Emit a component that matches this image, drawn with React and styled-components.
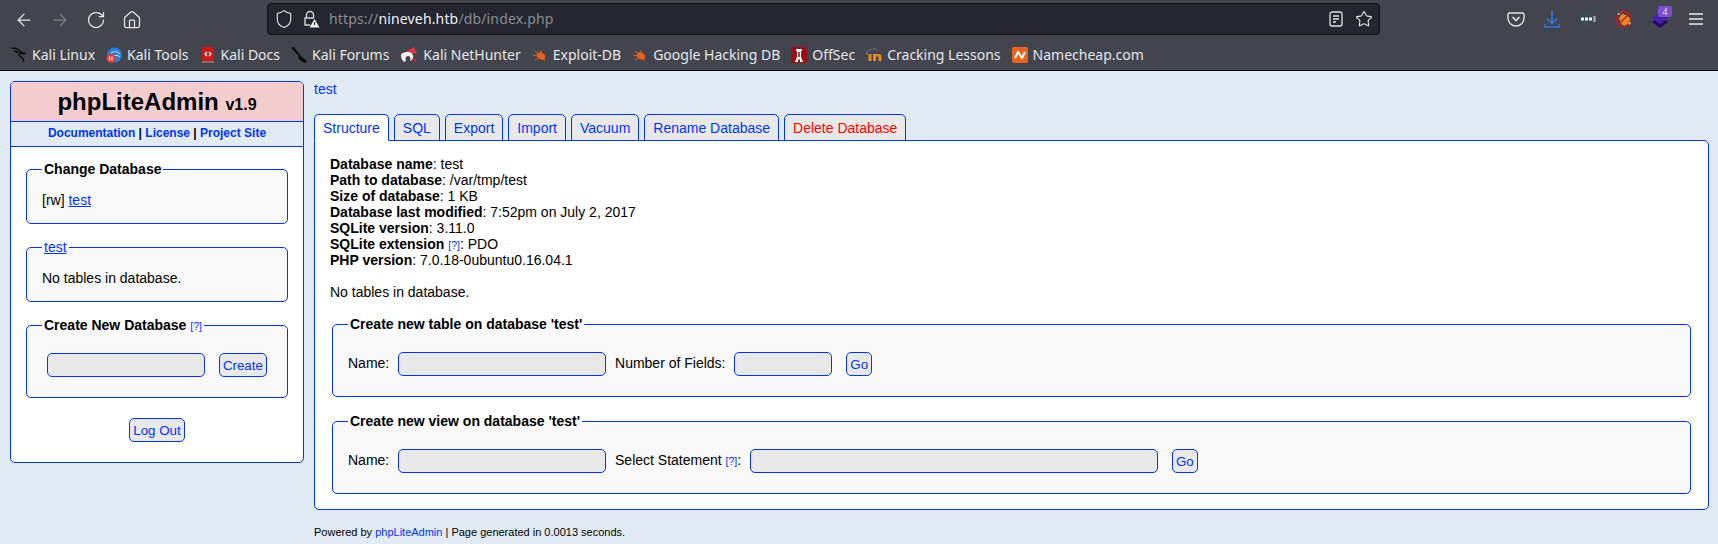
import styled, { createGlobalStyle } from 'styled-components';
import { ArrowLeft, ArrowRight, RotateCw, Home, Shield, Star } from 'lucide-react';

const GlobalStyle = createGlobalStyle`
  body {
    margin: 0;
    background: #e0ebf6;
    color: #000;
    font-family: "Liberation Sans", Arial, sans-serif;
    font-size: 14px;
    line-height: 16px;
  }
  a {
    color: #03f;
    text-decoration: none;
  }
`;

const Chrome = styled.div`
  height: 70px;
  background: #42454d;
  border-bottom: 1px solid #0c0c0f;
  color: #e6e7ea;
  font-family: "Noto Sans", sans-serif;
`;

const Toolbar = styled.div`
  display: flex;
  align-items: center;
  height: 38px;
`;

const NavButtons = styled.div`
  display: flex;
  align-items: center;
  gap: 16px;
  padding: 2px 0 0 14px;
  width: 267px;
  box-sizing: border-box;
`;

const NavIcon = styled.span`
  display: flex;
  color: ${(p) => (p.$off ? '#7d7f85' : '#e6e7ea')};
`;

const UrlBar = styled.div`
  display: flex;
  align-items: center;
  width: 1113px;
  height: 32px;
  box-sizing: border-box;
  padding: 0 6px;
  background: #23252f;
  border: 1px solid #0e0f13;
  border-radius: 4px;
  font-size: 14px;
  letter-spacing: 0.15px;
  color: #8b8d94;
`;

const UrlIcons = styled.div`
  display: flex;
  align-items: center;
  gap: 8px;
`;

const UrlText = styled.div`
  margin-left: 9px;
  flex: 1;
  b {
    color: #f2f3f5;
    font-weight: 400;
  }
`;

const UrlActions = styled.div`
  display: flex;
  align-items: center;
  gap: 10px;
`;

const ToolActions = styled.div`
  display: flex;
  align-items: center;
  gap: 16px;
  margin-left: auto;
  padding-right: 12px;
`;

const ToolIcon = styled.span`
  display: flex;
  width: 20px;
  height: 20px;
`;

const StackIcon = styled(ToolIcon)`
  position: relative;
`;

const Badge = styled.span`
  position: absolute;
  top: -3px;
  right: -2px;
  width: 14px;
  height: 11px;
  background: #7b4fd0;
  border-radius: 2px;
  color: #e4dcf7;
  font-size: 9px;
  line-height: 11px;
  text-align: center;
`;

const Bookmarks = styled.div`
  display: flex;
  align-items: center;
  gap: 11px;
  height: 32px;
  box-sizing: border-box;
  padding: 2px 0 0 11px;
  font-size: 14px;
`;

const Bookmark = styled.div`
  display: flex;
  align-items: center;
  gap: 5px;
  white-space: nowrap;
`;

const Page = styled.div`
  display: flex;
  align-items: flex-start;
  gap: 10px;
  padding: 10px 9px 0 10px;
`;

const Sidebar = styled.div`
  flex: 0 0 294px;
  box-sizing: border-box;
  height: 382px;
  background: #fff;
  border: 1px solid #03f;
  border-radius: 5px;
  overflow: hidden;
`;

const Title = styled.h1`
  margin: 0;
  height: 39px;
  background: #f3cdcd;
  font-size: 24px;
  line-height: 39px;
  font-weight: 700;
  text-align: center;
  span {
    font-size: 16px;
  }
`;

const SideNav = styled.div`
  height: 24px;
  background: #e0ebf6;
  border-top: 1px solid #03f;
  border-bottom: 1px solid #03f;
  font-size: 12px;
  line-height: 23px;
  font-weight: 700;
  text-align: center;
`;

const SideBody = styled.div`
  padding: 14px 13px;
  text-align: center;
`;

const Box = styled.fieldset`
  margin: 0 2px ${(p) => p.$gap || 15}px;
  padding: 15px;
  background: #f9f9f9;
  border: 1px solid #03f;
  border-radius: 5px;
  text-align: left;
`;

const Legend = styled.legend`
  padding: 0 2px;
  font-weight: ${(p) => (p.$plain ? 400 : 700)};
`;

const UnderLink = styled.a`
  text-decoration: underline;
`;

const Help = styled.a`
  font-size: 10.5px;
  line-height: 1;
  font-weight: 400;
`;

const Field = styled.input`
  box-sizing: border-box;
  width: ${(p) => p.$w}px;
  height: 24px;
  margin: 5px;
  padding: 0 4px;
  vertical-align: middle;
  background: #e9e9e9;
  border: 1px solid #03f;
  border-radius: 5px;
`;

const Btn = styled.button`
  box-sizing: border-box;
  height: 24px;
  margin: 5px;
  padding: 0 3px;
  vertical-align: middle;
  background: #e9e9e9;
  border: 1px solid #03f;
  border-radius: 5px;
  color: #03f;
  font-family: "Liberation Sans", Arial, sans-serif;
  font-size: 13.33px;
`;

const Main = styled.div`
  flex: 1;
  min-width: 0;
`;

const Crumb = styled.div`
  margin-bottom: 17px;
`;

const Tabs = styled.div`
  display: flex;
  gap: 5px;
  position: relative;
  z-index: 1;
  margin-bottom: -1px;
`;

const Tab = styled.a`
  box-sizing: border-box;
  height: 27px;
  padding: 0 8px;
  line-height: 26px;
  background: ${(p) => (p.$active ? '#fff' : '#e9e9e9')};
  border: 1px solid #03f;
  border-bottom: ${(p) => (p.$active ? '1px solid #fff' : '1px solid #03f')};
  border-radius: 5px 5px 0 0;
  color: ${(p) => (p.$danger ? '#f00' : '#03f')};
`;

const Panel = styled.div`
  padding: 15px 15px 0;
  background: #fff;
  border: 1px solid #03f;
  border-radius: 0 5px 5px 5px;
`;

const Info = styled.div`
  margin-bottom: 16px;
`;

const Footer = styled.div`
  margin-top: 14px;
  font-size: 11px;
  line-height: 16px;
`;

const KaliDragon = () => (
  <svg width="16" height="16" viewBox="0 0 16 16" fill="none" stroke="#0b0b0b" strokeWidth="1.4">
    <path d="M1 1.500c3-.8 6 .3 7.500 2.500 1 1.500 2.500 2 6 2.500-3 .3-4.500.3-5.500-.3-1.500 1-1 3 1 4 2 1 3 2.500 2.500 4.800" />
    <path d="M3 4c2 0 3.500.8 4 2" />
  </svg>
);

const KaliTools = () => (
  <svg width="16" height="16" viewBox="0 0 16 16">
    <circle cx="8.500" cy="8" r="7.500" fill="#2b7de0" />
    <path d="M5 6c3-2 6-2 9 1M7 9c2-1 5-1 7 1" stroke="#cfe3f8" fill="none" />
    <circle cx="5" cy="11.500" r="4.500" fill="#e23b2e" />
    <path d="M3.500 9.500v4M6 9.500v4" stroke="#fff" strokeWidth="1.200" />
  </svg>
);

const KaliDocs = () => (
  <svg width="16" height="16" viewBox="0 0 16 16">
    <rect x="2" y="0" width="12" height="15" fill="#c81a1a" />
    <rect x="2" y="14" width="12" height="2" fill="#8c6a6a" />
    <path d="M7 5L5 7l2 2M9 5l2 2-2 2" stroke="#fff" fill="none" strokeWidth="1.200" />
  </svg>
);

const KaliForums = () => (
  <svg width="16" height="16" viewBox="0 0 16 16" fill="#0a0a0a">
    <path d="M0 1l3-1 3 4 3 4 3 3 4 3-1 2-3-1-4-3-1-4-3-3z" />
  </svg>
);

const NetHunter = () => (
  <svg width="18" height="16" viewBox="0 0 18 16">
    <path d="M1 8L14 0l3 6-7 1-3 3z" fill="#e2343a" />
    <path d="M1 8c0-2 4-3 7-3 4 0 6 3 5 7l-3 2c1-3 0-5-2-5-2 0-3 2-2 5l-2 1C2 13 1 11 1 8z" fill="#f1f1f1" />
    <path d="M12 11l5 1-3 3z" fill="#d22" />
  </svg>
);

const Bug = () => (
  <svg width="16" height="16" viewBox="0 0 16 16" fill="#e8601c" stroke="#e8601c">
    <ellipse cx="9" cy="9" rx="4.500" ry="3.200" transform="rotate(30 9 9)" stroke="none" />
    <path d="M3 4l4 3M1 8l5 1M3 13l4-2M8 3l2 3M13 14l-2-3" strokeWidth="0.900" fill="none" />
  </svg>
);

const OffSecIcon = () => (
  <svg width="16" height="16" viewBox="0 0 16 16">
    <rect width="16" height="16" fill="#9d0f17" />
    <path d="M5 2h6v2h-1v6l2 5H4l2-5V4H5z" fill="#fff" />
    <rect x="7.200" y="5" width="1.600" height="5" fill="#9d0f17" />
    <rect x="7" y="12.500" width="2" height="2.500" fill="#9d0f17" />
  </svg>
);

const CrackingIcon = () => (
  <svg width="16" height="16" viewBox="0 0 16 16">
    <rect x="0" y="5" width="2" height="3" fill="#6a6a6a" />
    <path d="M0 6c2-4 8-5 12-3" stroke="#5c5c5c" strokeWidth="1.500" fill="none" />
    <rect x="2.500" y="7" width="3" height="7" fill="#e88a1a" />
    <path d="M7 14V7h6c1.500 0 2.500 1 2.500 2.500V14h-3V9.500h-2.500V14z" fill="#e88a1a" />
  </svg>
);

const NamecheapIcon = () => (
  <svg width="16" height="16" viewBox="0 0 16 16">
    <rect width="16" height="16" rx="2" fill="#e9641d" />
    <path d="M3 11l3-6 4 6 3-6" stroke="#fff" strokeWidth="2" fill="none" strokeLinejoin="round" />
  </svg>
);

const LockWarn = () => (
  <svg width="18" height="18" viewBox="0 0 18 18" fill="none" stroke="#d5d6da" strokeWidth="1.400">
    <path d="M4.500 8V5a3.500 3.500 0 0 1 7 0v3" />
    <path d="M8 15H3V8h9" />
    <path d="M12.500 9l5 8.500h-10z" fill="#f0f0f2" stroke="none" />
    <path d="M12.500 12v3" stroke="#23252f" strokeWidth="1.200" />
  </svg>
);

const Reader = () => (
  <svg width="18" height="18" viewBox="0 0 18 18" fill="none" stroke="#e0e1e4" strokeWidth="1.300">
    <rect x="3" y="2" width="12" height="14" rx="2" />
    <path d="M6 6h6M6 9h6M6 12h3" />
  </svg>
);

const Pocket = () => (
  <svg width="20" height="20" viewBox="0 0 20 20" fill="none" stroke="#e0e1e4" strokeWidth="1.400">
    <path d="M3.500 4h13A1.500 1.500 0 0 1 18 5.500V9a8 8 0 0 1-16 0V5.500A1.500 1.500 0 0 1 3.500 4z" />
    <path d="M6.500 8l3.500 3.500L13.500 8" strokeWidth="1.700" />
  </svg>
);

const Download = () => (
  <svg width="20" height="20" viewBox="0 0 20 20" fill="none" stroke="#2f7be8" strokeWidth="1.500">
    <path d="M10 2v12M5 9.500l5 5 5-5" />
    <path d="M3 15v3h14v-3" />
  </svg>
);

const Dots = () => (
  <svg width="20" height="20" viewBox="0 0 20 20">
    <rect x="2" y="3" width="16" height="14" fill="#3c4a54" />
    <path d="M3 8.500h3v3H3zM7 8.500h3v3H7zM11 8.500h3v3h-3z" fill="#f4f4f4" />
    <rect x="15.500" y="7" width="2" height="6" fill="#aeb4b8" />
  </svg>
);

const FoxOff = () => (
  <svg width="20" height="20" viewBox="0 0 20 20">
    <circle cx="10" cy="10" r="7.500" fill="#42454d" />
    <path d="M5 9l3-4 4 1 4 3-1 5-4 3-4-2z" fill="#e98a1e" />
    <circle cx="10" cy="10" r="7.500" fill="none" stroke="#c8161d" strokeWidth="1.500" />
    <path d="M15.500 4.500l-11 11" stroke="#c8161d" strokeWidth="1.500" />
    <path d="M3 5l2-1 1 2zM15 13l2 1-2 2z" fill="#f0f0f0" />
  </svg>
);

const Stack = () => (
  <svg width="20" height="20" viewBox="0 0 20 20">
    <path d="M10 8l8 5-8 6-8-6z" fill="#24096e" />
    <path d="M10 3l8 6-8 6-8-6z" fill="#4522a8" />
  </svg>
);

const Menu = () => (
  <svg width="20" height="20" viewBox="0 0 20 20" stroke="#e6e7ea" strokeWidth="1.500">
    <path d="M3 5h14M3 10h14M3 15h14" />
  </svg>
);

const marks = [
  ['Kali Linux', <KaliDragon />],
  ['Kali Tools', <KaliTools />],
  ['Kali Docs', <KaliDocs />],
  ['Kali Forums', <KaliForums />],
  ['Kali NetHunter', <NetHunter />],
  ['Exploit-DB', <Bug />],
  ['Google Hacking DB', <Bug />],
  ['OffSec', <OffSecIcon />],
  ['Cracking Lessons', <CrackingIcon />],
  ['Namecheap.com', <NamecheapIcon />],
];

const tabs = ['Structure', 'SQL', 'Export', 'Import', 'Vacuum', 'Rename Database', 'Delete Database'];

const info = [
  ['Database name', 'test'],
  ['Path to database', '/var/tmp/test'],
  ['Size of database', '1 KB'],
  ['Database last modified', '7:52pm on July 2, 2017'],
  ['SQLite version', '3.11.0'],
];

export default function App() {
  return (
    <>
      <GlobalStyle />
      <Chrome>
        <Toolbar>
          <NavButtons>
            <NavIcon><ArrowLeft size={20} strokeWidth={1.5} /></NavIcon>
            <NavIcon $off><ArrowRight size={20} strokeWidth={1.5} /></NavIcon>
            <NavIcon><RotateCw size={20} strokeWidth={1.5} /></NavIcon>
            <NavIcon><Home size={20} strokeWidth={1.5} /></NavIcon>
          </NavButtons>
          <UrlBar>
            <UrlIcons>
              <Shield size={20} strokeWidth={1.5} color="#d5d6da" />
              <LockWarn />
            </UrlIcons>
            <UrlText>https://<b>nineveh.htb</b>/db/index.php</UrlText>
            <UrlActions>
              <Reader />
              <Star size={18} strokeWidth={1.5} color="#e0e1e4" />
            </UrlActions>
          </UrlBar>
          <ToolActions>
            <ToolIcon><Pocket /></ToolIcon>
            <ToolIcon><Download /></ToolIcon>
            <ToolIcon><Dots /></ToolIcon>
            <ToolIcon><FoxOff /></ToolIcon>
            <StackIcon><Stack /><Badge>4</Badge></StackIcon>
            <ToolIcon><Menu /></ToolIcon>
          </ToolActions>
        </Toolbar>
        <Bookmarks>
          {marks.map(([label, icon]) => (
            <Bookmark key={label}>{icon}{label}</Bookmark>
          ))}
        </Bookmarks>
      </Chrome>
      <Page>
        <Sidebar>
          <Title>phpLiteAdmin <span>v1.9</span></Title>
          <SideNav>
            <a href="#doc">Documentation</a> | <a href="#lic">License</a> | <a href="#site">Project Site</a>
          </SideNav>
          <SideBody>
            <Box>
              <Legend>Change Database</Legend>
              [rw] <UnderLink href="#test">test</UnderLink>
            </Box>
            <Box>
              <Legend $plain><UnderLink href="#test">test</UnderLink></Legend>
              No tables in database.
            </Box>
            <Box>
              <Legend>Create New Database <Help href="#help">[?]</Help></Legend>
              <Field $w={158} /> <Btn>Create</Btn>
            </Box>
            <Btn>Log Out</Btn>
          </SideBody>
        </Sidebar>
        <Main>
          <Crumb><a href="#test">test</a></Crumb>
          <Tabs>
            {tabs.map((t, i) => (
              <Tab key={t} href="#tab" $active={i === 0} $danger={t === 'Delete Database'}>{t}</Tab>
            ))}
          </Tabs>
          <Panel>
            <Info>
              {info.map(([k, v]) => (
                <div key={k}><b>{k}</b>: {v}</div>
              ))}
              <div><b>SQLite extension</b> <Help href="#help">[?]</Help>: PDO</div>
              <div><b>PHP version</b>: 7.0.18-0ubuntu0.16.04.1</div>
              <br />
              No tables in database.
            </Info>
            <Box $gap={16}>
              <Legend>Create new table on database 'test'</Legend>
              Name: <Field $w={208} /> Number of Fields: <Field $w={98} /> <Btn>Go</Btn>
            </Box>
            <Box>
              <Legend>Create new view on database 'test'</Legend>
              Name: <Field $w={208} /> Select Statement <Help href="#help">[?]</Help>: <Field $w={408} /> <Btn>Go</Btn>
            </Box>
          </Panel>
          <Footer>
            Powered by <a href="#home">phpLiteAdmin</a> | Page generated in 0.0013 seconds.
          </Footer>
        </Main>
      </Page>
    </>
  );
}
